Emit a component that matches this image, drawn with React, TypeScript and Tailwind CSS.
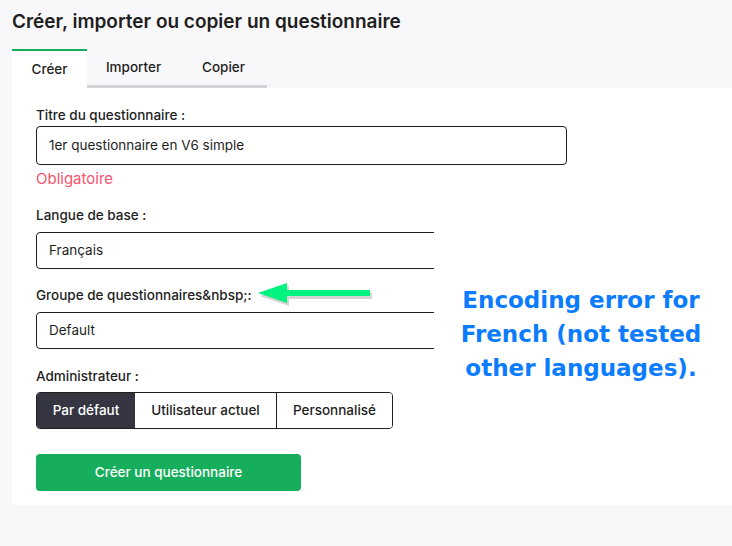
import React from "react";

const font = { fontFamily: "Inter, 'Noto Sans', sans-serif" };

function Label({ children, className = "" }: { children: React.ReactNode; className?: string }) {
  return <div className={`text-[13.5px] leading-[20px] font-medium text-[#1e1e1e] ${className}`}>{children}</div>;
}

function Field({ value, className = "" }: { value: string; className?: string }) {
  return (
    <div className={`flex w-[531px] items-center rounded-[4px] border border-[#1f1f1f] px-[12px] text-[13.5px] text-[#1e1e1e] ${className}`}>
      {value}
    </div>
  );
}

function Arrow() {
  return (
    <svg width="120" height="30" viewBox="0 0 120 30" className="absolute left-[254px] top-[280px]">
      <g opacity="0.25" transform="translate(2,3)">
        <path d="M4 13 L33 3 L33 10 L116 10 L116 16 L33 16 L33 23 Z" fill="#555" />
      </g>
      <path d="M4 13 L33 3 L33 10 L116 10 L116 16 L33 16 L33 23 Z" fill="#00f27f" />
    </svg>
  );
}

export default function App() {
  return (
    <div className="relative min-h-[546px] w-[732px] bg-[#f8f8fa] pl-[12px]" style={font}>
      <h1 className="pt-[9px] text-[19px] leading-[26px] font-semibold text-[#1e1e1e]">
        Créer, importer ou copier un questionnaire
      </h1>
      <div className="mt-[14px] flex h-[39px] text-[13.5px] font-medium text-[#1e1e1e]">
        <div className="flex w-[75px] items-center justify-center border-t-2 border-[#14ae5c] bg-white">Créer</div>
        <div className="flex w-[93px] items-center justify-center border-b-[3px] border-[#d4d4d8]">Importer</div>
        <div className="flex w-[87px] items-center justify-center border-b-[3px] border-[#d4d4d8]">Copier</div>
      </div>
      <div className="h-[417px] bg-white pl-[24px] pt-[17px]">
        <Label>Titre du questionnaire :</Label>
        <Field value="1er questionnaire en V6 simple" className="mt-[1px] h-[39px]" />
        <div className="mt-[1px] text-[15px] leading-[26px] text-[#f4546e]">Obligatoire</div>
        <Label className="mt-[13px]">Langue de base :</Label>
        <Field value="Français" className="mt-[7px] h-[37px]" />
        <Label className="mt-[16px]">Groupe de questionnaires&amp;nbsp;:</Label>
        <Field value="Default" className="mt-[7px] h-[37px]" />
        <Label className="mt-[17px]">Administrateur :</Label>
        <div className="mt-[6px] flex h-[37px] w-fit overflow-hidden rounded-[4px] border border-[#1f1f1f] text-[13.5px] font-medium">
          <div className="flex w-[98px] items-center justify-center bg-[#343541] text-white">Par défaut</div>
          <div className="flex w-[142px] items-center justify-center border-r border-[#1f1f1f] bg-white text-[#1e1e1e]">Utilisateur actuel</div>
          <div className="flex w-[115px] items-center justify-center bg-white text-[#1e1e1e]">Personnalisé</div>
        </div>
        <button className="mt-[25px] flex h-[37px] w-[265px] items-center justify-center rounded-[4px] bg-[#16ae5c] text-[13.5px] font-medium text-white">
          Créer un questionnaire
        </button>
      </div>
      <div
        className="absolute left-[434px] top-[226px] flex h-[160px] w-[298px] flex-col items-center bg-white pr-[4px] pt-[57px] text-[23px] leading-[34px] font-bold text-[#0b7cfd]"
        style={{ fontFamily: "'DejaVu Sans', Verdana, sans-serif" }}
      >
        <div>Encoding error for</div>
        <div>French (not tested</div>
        <div>other languages).</div>
      </div>
      <Arrow />
    </div>
  );
}
